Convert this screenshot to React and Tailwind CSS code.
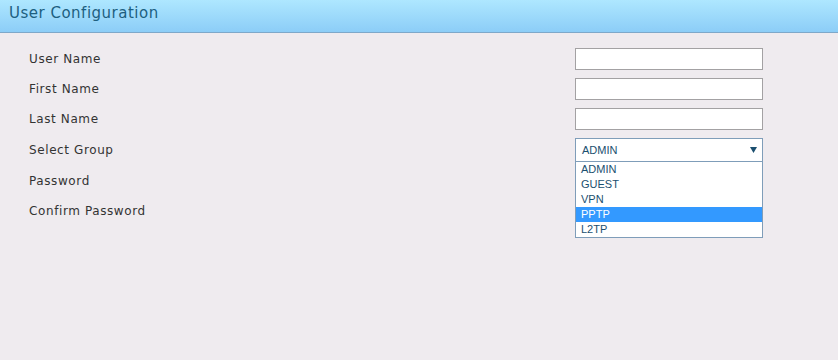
import React, { useState } from 'react';

const groups = ['ADMIN', 'GUEST', 'VPN', 'PPTP', 'L2TP'];

const Row = ({ label, h = 'h-[30px]', children }) => (
  <div className={`flex items-center ${h}`}>
    <div className="w-[575px] shrink-0 pl-[29px] text-[12px] tracking-[0.6px] text-[#333333]">{label}</div>
    <div className="relative">{children}</div>
  </div>
);

const TextBox = ({ type = 'text' }) => (
  <input
    type={type}
    className="block w-[188px] h-[22px] border border-[#a3a1a3] bg-white px-1 text-[12px] outline-none"
  />
);

export default function App() {
  const [group, setGroup] = useState('ADMIN');
  const [hover, setHover] = useState('PPTP');

  return (
    <div className="w-[838px] h-[360px] bg-[#efebef] font-['DejaVu_Sans',sans-serif]">
      {/* Title bar */}
      <div className="h-[33px] border-b border-[#7ea8c9] bg-gradient-to-b from-[#aee7ff] to-[#8ccdf7] pl-[9px] pt-[1px]">
        <span className="text-[15px] tracking-[0.5px] text-[#1d5f80]">User Configuration</span>
      </div>

      <div className="pt-[11px]">
        <Row label="User Name"><TextBox /></Row>
        <Row label="First Name"><TextBox /></Row>
        <Row label="Last Name"><TextBox /></Row>
        <Row label="Select Group" h="h-[32px]">
          <div className="relative z-10">
            <div className="flex items-center justify-between w-[188px] h-[24px] border border-[#7f9db9] bg-white pl-[6px] pr-[5px] font-['Liberation_Sans',sans-serif] text-[11px] text-[#1b4f6f]">
              <span>{group}</span>
              <svg width="7" height="6" viewBox="0 0 7 6">
                <path d="M0 0 L7 0 L3.5 6 Z" fill="#1b4f6f" />
              </svg>
            </div>
            {/* open list */}
            <div className="absolute left-0 top-[24px] w-[188px] border border-[#7f9db9] border-t-0 bg-white font-['Liberation_Sans',sans-serif] text-[11px]">
              {groups.map((g) => (
                <div
                  key={g}
                  onMouseEnter={() => setHover(g)}
                  onClick={() => setGroup(g)}
                  className={`h-[15px] leading-[15px] pl-[5px] ${
                    hover === g ? 'bg-[#3399ff] text-white' : 'text-[#1b4f6f]'
                  }`}
                >
                  {g}
                </div>
              ))}
            </div>
          </div>
        </Row>
        <Row label="Password"><TextBox type="password" /></Row>
        <Row label="Confirm Password"><TextBox type="password" /></Row>
      </div>
    </div>
  );
}
